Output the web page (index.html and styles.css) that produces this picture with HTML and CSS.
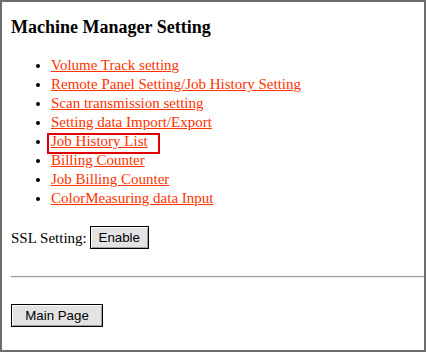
FILE: index.html
```html
<!DOCTYPE html>
<html lang="en">
<head>
	<meta charset="UTF-8">
	<title>Machine Manager Setting</title>
	<link rel="stylesheet" href="styles.css">
</head>
<body>
	<div class="frame">
		<h3 class="title">Machine Manager Setting</h3>
		<ul class="menu">
			<li><a href="#">Volume Track setting</a></li>
			<li><a href="#">Remote Panel Setting/Job History Setting</a></li>
			<li><a href="#">Scan transmission setting</a></li>
			<li><a href="#">Setting data Import/Export</a></li>
			<li class="marked"><a href="#">Job History List</a><span class="highlight"></span></li>
			<li><a href="#">Billing Counter</a></li>
			<li><a href="#">Job Billing Counter</a></li>
			<li><a href="#">ColorMeasuring data Input</a></li>
		</ul>
		<div class="ssl-row">
			SSL Setting: <button class="btn btn-enable">Enable</button>
		</div>
		<hr class="rule">
		<div class="footer">
			<button class="btn btn-main">Main Page</button>
		</div>
	</div>
</body>
</html>
```

FILE: styles.css
```css
html, body {
	margin: 0;
	padding: 0;
	background: #fff;
}

body {
	font-family: "Liberation Serif", "Times New Roman", serif;
	font-size: 15px;
	color: #000;
}

.frame {
	box-sizing: border-box;
	width: 426px;
	height: 352px;
	border: 2px solid #6e6e6e;
	padding: 0 0 0 9px;
}

.title {
	font-size: 18px;
	font-weight: bold;
	margin: 15px 0 0 0;
	line-height: 21px;
}

.menu {
	margin: 18px 0 0 0;
	padding-left: 40px;
	line-height: 19px;
}

.menu a {
	color: #ff3300;
}

.marked {
	position: relative;
}

.highlight {
	position: absolute;
	left: -4px;
	top: 1px;
	width: 109px;
	height: 17px;
	border: 2px solid #e00000;
}

.ssl-row {
	margin-top: 19px;
	display: flex;
	align-items: center;
	gap: 3px;
	height: 23px;
}

.btn {
	font-family: "Liberation Sans", Arial, sans-serif;
	font-size: 13.3px;
	color: #000;
	background: #e3e3e3;
	border: 1px solid #000;
	box-shadow: inset 1px 1px 0 #fcfcfc, inset -1px -1px 0 #a0a0a0;
	padding: 0;
	height: 23px;
}

.btn-enable {
	width: 59px;
	margin-top: -2px;
}

.btn-main {
	width: 92px;
}

.rule {
	margin: 26px 0 0 0;
	border: 0;
	border-top: 1px solid #9a9a9a;
	border-bottom: 1px solid #eeeeee;
	height: 0;
}

.footer {
	margin-top: 26px;
}
```
